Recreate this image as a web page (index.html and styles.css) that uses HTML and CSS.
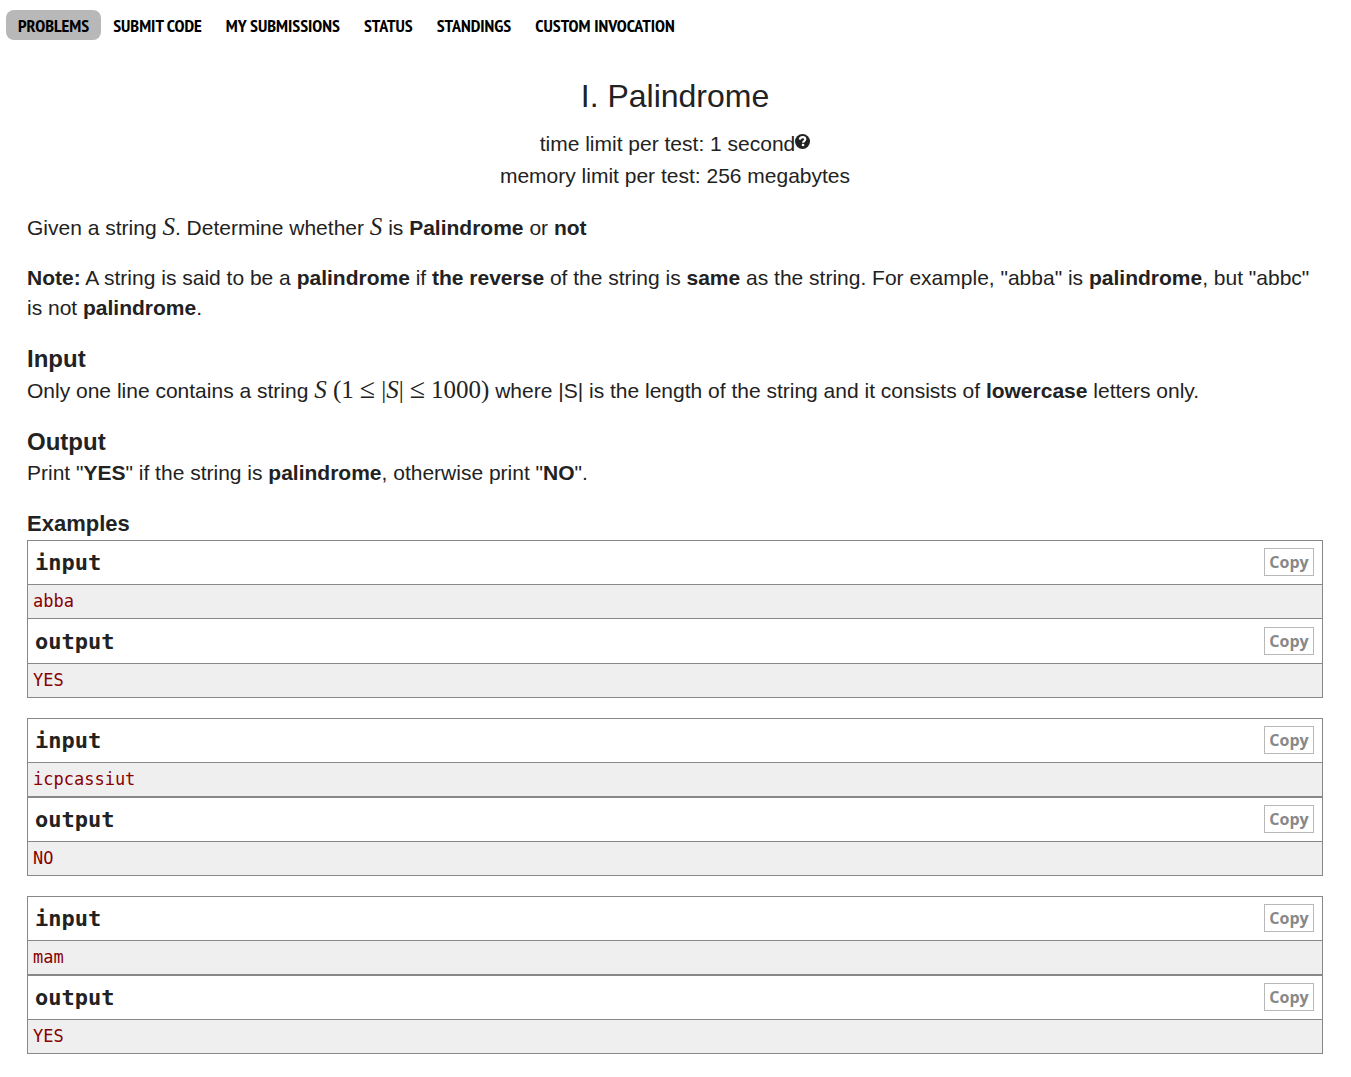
FILE: index.html
```html
<!DOCTYPE html>
<html lang="en">
<head>
<meta charset="utf-8">
<title>I. Palindrome</title>
<link rel="stylesheet" href="styles.css">
</head>
<body>
<nav class="menu">
  <a class="menu-link current" href="#problems">PROBLEMS</a>
  <a class="menu-link" href="#submit">SUBMIT CODE</a>
  <a class="menu-link" href="#my">MY SUBMISSIONS</a>
  <a class="menu-link" href="#status">STATUS</a>
  <a class="menu-link" href="#standings">STANDINGS</a>
  <a class="menu-link" href="#invocation">CUSTOM INVOCATION</a>
</nav>
<main class="problem">
  <header class="header">
    <h1 class="title">I. Palindrome</h1>
    <div class="limit">time limit per test: 1 second<svg class="help" viewBox="0 0 14 14" aria-hidden="true"><circle cx="7" cy="7" r="7" fill="#222"/><path d="M4.500 5.300C4.600 3.600 5.700 2.900 7.100 2.900c1.500 0 2.500.8 2.500 2.100 0 1.600-2.100 1.700-2.100 3.200" fill="none" stroke="#fff" stroke-width="2"/><path d="M6.400 9.200h2.200v2.100h-2.200z" fill="#fff"/></svg></div>
    <div class="limit">memory limit per test: 256 megabytes</div>
  </header>
  <p class="text">Given a string <i class="math">S</i>. Determine whether <i class="math">S</i> is <b>Palindrome</b> or <b>not</b></p>
  <p class="text"><b>Note:</b> A string is said to be a <b>palindrome</b> if <b>the reverse</b> of the string is <b>same</b> as the string. For example, "abba" is <b>palindrome</b>, but "abbc" is not <b>palindrome</b>.</p>
  <section class="section">
    <h2 class="heading">Input</h2>
    <p class="text">Only one line contains a string <span class="math"><i>S</i> (1<span class="rel">≤</span>|<i>S</i>|<span class="rel">≤</span>1000)</span> where |S| is the length of the string and it consists of <b>lowercase</b> letters only.</p>
  </section>
  <section class="section">
    <h2 class="heading">Output</h2>
    <p class="text">Print "<b>YES</b>" if the string is <b>palindrome</b>, otherwise print "<b>NO</b>".</p>
  </section>
  <section class="samples">
    <h2 class="samples-heading">Examples</h2>
    <div class="sample single-rule">
      <div class="block"><div class="bar"><h3 class="bar-title">input</h3><button class="copy" type="button">Copy</button></div><pre class="data">abba</pre></div>
      <div class="block"><div class="bar"><h3 class="bar-title">output</h3><button class="copy" type="button">Copy</button></div><pre class="data">YES</pre></div>
    </div>
    <div class="sample">
      <div class="block"><div class="bar"><h3 class="bar-title">input</h3><button class="copy" type="button">Copy</button></div><pre class="data">icpcassiut</pre></div>
      <div class="block"><div class="bar"><h3 class="bar-title">output</h3><button class="copy" type="button">Copy</button></div><pre class="data">NO</pre></div>
    </div>
    <div class="sample">
      <div class="block"><div class="bar"><h3 class="bar-title">input</h3><button class="copy" type="button">Copy</button></div><pre class="data">mam</pre></div>
      <div class="block"><div class="bar"><h3 class="bar-title">output</h3><button class="copy" type="button">Copy</button></div><pre class="data">YES</pre></div>
    </div>
  </section>
</main>
</body>
</html>
```
FILE: styles.css
```css
* {
  box-sizing: border-box;
}

body {
  margin: 0;
  background: #fff;
  color: #222;
  font: 21px/30px "Liberation Sans", Arial, sans-serif;
}

h1, h2, h3, p, pre {
  margin: 0;
}

.menu {
  display: flex;
  padding: 10px 6px 0;
}

.menu-link {
  height: 30px;
  padding: 0 12px;
  border-radius: 8px;
  color: #000;
  font: bold 18px/32px "PT Sans Narrow", "Liberation Sans Narrow", "Open Sans Condensed", "Roboto Condensed", "Liberation Sans", sans-serif;
  white-space: nowrap;
  text-decoration: none;
}

.current {
  background: #b8b8b8;
}

.problem {
  padding: 32px 28px 20px 27px;
}

.header {
  margin-bottom: 21px;
  text-align: center;
}

.title {
  margin-bottom: 8px;
  font-size: 32px;
  font-weight: normal;
  line-height: 48px;
}

.limit {
  line-height: 32px;
}

.help {
  width: 15px;
  height: 15px;
  vertical-align: 2px;
}

.text {
  margin-bottom: 20px;
}

.math {
  font-family: "Liberation Serif", "Times New Roman", serif;
  font-size: 25px;
  line-height: 1;
}

.rel {
  margin: 0 6px;
  font-size: 28px;
  line-height: 1;
}

.heading {
  font-size: 24px;
  line-height: 32px;
}

.samples-heading {
  font-size: 22px;
  line-height: 32px;
}

.sample {
  margin-bottom: 20px;
}

.block {
  border: 1px solid #888;
}

.single-rule .block + .block {
  padding-top: 1px;
  border-top: 0;
}

.bar {
  display: flex;
  align-items: center;
  justify-content: space-between;
  height: 44px;
  padding: 0 8px 0 7px;
  border-bottom: 1px solid #888;
}

.bar-title {
  font: bold 22px/30px "DejaVu Sans Mono", monospace;
}

.copy {
  width: 50px;
  height: 28px;
  margin-bottom: 2px;
  padding: 0;
  border: 1px solid #b8b8b8;
  background: #fff;
  color: #888;
  font: bold 16px/24px "Open Sans", "Noto Sans", sans-serif;
}

.data {
  padding: 0 5px;
  background: #efefef;
  color: #880000;
  font: 17px/33px "DejaVu Sans Mono", monospace;
}
```
